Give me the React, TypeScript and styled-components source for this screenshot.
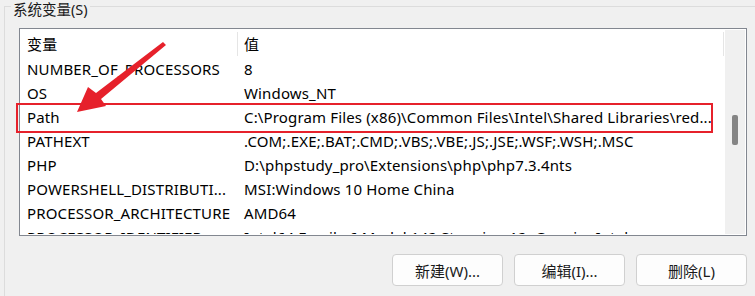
import React from "react";
import styled, { createGlobalStyle } from "styled-components";

interface EnvVar {
  name: string;
  value: string;
}

interface ListProps {
  $width: number;
}

const GlobalStyle = createGlobalStyle`
  html, body {
    margin: 0;
    padding: 0;
    background: #f0f0f0;
    overflow: hidden;
  }
  body {
    font-family: "Noto Sans", "Noto Sans CJK SC", sans-serif;
    color: #000;
  }
`;

const vars: EnvVar[] = [
  { name: "NUMBER_OF_PROCESSORS", value: "8" },
  { name: "OS", value: "Windows_NT" },
  {
    name: "Path",
    value: "C:\\Program Files (x86)\\Common Files\\Intel\\Shared Libraries\\red...",
  },
  { name: "PATHEXT", value: ".COM;.EXE;.BAT;.CMD;.VBS;.VBE;.JS;.JSE;.WSF;.WSH;.MSC" },
  { name: "PHP", value: "D:\\phpstudy_pro\\Extensions\\php\\php7.3.4nts" },
  { name: "POWERSHELL_DISTRIBUTI...", value: "MSI:Windows 10 Home China" },
  { name: "PROCESSOR_ARCHITECTURE", value: "AMD64" },
  {
    name: "PROCESSOR_IDENTIFIER",
    value: "Intel64 Family 6 Model 142 Stepping 12, GenuineIntel",
  },
];

const App: React.FC = () => {
  return (
    <>
      <GlobalStyle />
      <Page>
        <GroupBox>
          <Legend>系统变量(S)</Legend>
          <Inner>
            <List $width={728}>
              <Rows>
                <HeaderRow>
                  <HeaderCell>变量</HeaderCell>
                  <HeaderCell>值</HeaderCell>
                </HeaderRow>
                {vars.map((v) => (
                  <Row key={v.name}>
                    <NameCell>{v.name}</NameCell>
                    <ValueCell>{v.value}</ValueCell>
                  </Row>
                ))}
              </Rows>
              <ScrollTrack>
                <ScrollThumb />
              </ScrollTrack>
            </List>
            <ButtonBar>
              <Button>新建(W)...</Button>
              <Button>编辑(I)...</Button>
              <Button>删除(L)</Button>
            </ButtonBar>
          </Inner>
        </GroupBox>

        {/* annotation: red box + arrow */}
        <Annotation width="755" height="296" viewBox="0 0 755 296">
          <rect
            x="17"
            y="104"
            width="695"
            height="28"
            fill="none"
            stroke="#e6212b"
            strokeWidth="2"
          />
          <polygon
            points="77,112 88,87 96,93 163,42 166,45 101,99 106,106"
            fill="#e6212b"
          />
        </Annotation>
      </Page>
    </>
  );
};

export default App;

const Page = styled.div`
  position: relative;
  width: 755px;
  height: 296px;
  overflow: hidden;
`;

const GroupBox = styled.fieldset`
  margin: -4px 0 0 4px;
  padding: 0 0 0 14px;
  width: 800px;
  height: 400px;
  border: 1px solid #dcdcdc;
  box-sizing: border-box;
`;

const Legend = styled.legend`
  margin-left: -8px;
  padding: 5px 2px 0 2px;
  font-size: 14.5px;
  line-height: 16px;
  color: #1a1a1a;
`;

const Inner = styled.div`
  width: 728px;
  padding-top: 11px;
  display: flex;
  flex-direction: column;
`;

const List = styled.div<ListProps>`
  width: ${(props) => props.$width}px;
  height: 208px;
  box-sizing: border-box;
  border: 1px solid #828790;
  background: #fff;
  padding: 1px 1px 1px 0;
  display: flex;
  overflow: hidden;
`;

const Rows = styled.div`
  flex: 1;
  overflow: hidden;
  font-size: 15px;
  letter-spacing: 0.15px;
`;

const HeaderRow = styled.div`
  display: grid;
  grid-template-columns: 218px 486px;
  height: 27px;
  align-items: center;
`;

const HeaderCell = styled.div`
  height: 24px;
  line-height: 24px;
  padding-left: 7px;
  border-right: 1px solid #e5e5e5;
  white-space: nowrap;
  &:last-child {
    padding-left: 6px;
  }
`;

const Row = styled.div`
  display: grid;
  grid-template-columns: 218px 486px;
  height: 24px;
  line-height: 24px;
  white-space: nowrap;
`;

const NameCell = styled.div`
  padding-left: 7px;
  overflow: hidden;
`;

const ValueCell = styled.div`
  padding-left: 6px;
  overflow: hidden;
`;

const ScrollTrack = styled.div`
  width: 20px;
  background: #f0f0f0;
  display: flex;
  justify-content: center;
  padding-top: 85px;
  box-sizing: border-box;
`;

const ScrollThumb = styled.div`
  width: 6px;
  height: 30px;
  border-radius: 2px;
  background: #858585;
`;

const ButtonBar = styled.div`
  display: flex;
  justify-content: flex-end;
  gap: 11px;
  margin-top: 18px;
`;

const Button = styled.button`
  width: 111px;
  height: 32px;
  border: 1px solid #d0d0d0;
  border-radius: 4px;
  background: #fdfdfd;
  font-family: "Noto Sans", "Noto Sans CJK SC", sans-serif;
  font-size: 15px;
  color: #1a1a1a;
  padding: 0;
`;

const Annotation = styled.svg`
  position: absolute;
  left: 0;
  top: 0;
  pointer-events: none;
`;
